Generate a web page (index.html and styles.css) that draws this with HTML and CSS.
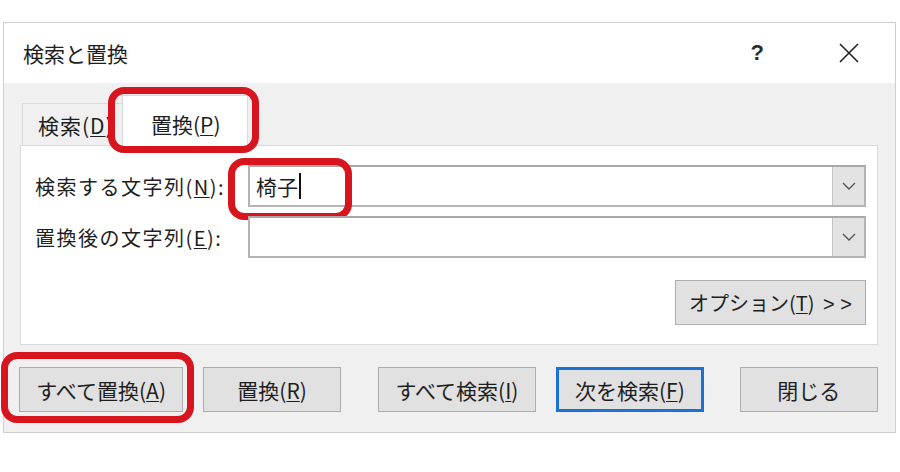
FILE: index.html
```html
<!DOCTYPE html>
<html lang="ja">
<head>
    <meta charset="UTF-8">
    <title>検索と置換</title>
    <link rel="stylesheet" href="styles.css">
</head>
<body>
<div class="dialog">
    <div class="title-bar">
        <span class="title">検索と置換</span>
        <span class="help">?</span>
        <span class="close">
            <svg width="22" height="22" viewBox="0 0 22 22"><path d="M2 2 L20 20 M20 2 L2 20" stroke="#222" stroke-width="1.6" fill="none"/></svg>
        </span>
    </div>
    <div class="dialog-body">
        <div class="tabs">
            <div class="tab">検索(<u>D</u>)</div>
            <div class="tab active">置換(<u>P</u>)</div>
            <div class="mark mark-tab"></div>
        </div>
        <div class="panel">
            <div class="field-row">
                <label class="field-label">検索する文字列(<u>N</u>):</label>
                <div class="combo">
                    <span class="combo-text">椅子<span class="caret"></span></span>
                    <span class="combo-button">
                        <svg width="14" height="8" viewBox="0 0 14 8"><path d="M1 1 L7 7 L13 1" stroke="#555" stroke-width="1.4" fill="none"/></svg>
                    </span>
                </div>
                <div class="mark mark-input"></div>
            </div>
            <div class="field-row">
                <label class="field-label">置換後の文字列(<u>E</u>):</label>
                <div class="combo">
                    <span class="combo-text"></span>
                    <span class="combo-button">
                        <svg width="14" height="8" viewBox="0 0 14 8"><path d="M1 1 L7 7 L13 1" stroke="#555" stroke-width="1.4" fill="none"/></svg>
                    </span>
                </div>
            </div>
            <div class="options-row">
                <button class="btn btn-options">オプション(<u>T</u>) <span class="arrows">&gt; &gt;</span></button>
            </div>
        </div>
        <div class="button-row">
            <button class="btn btn-all">すべて置換(<u>A</u>)</button>
            <button class="btn btn-replace">置換(<u>R</u>)</button>
            <button class="btn btn-findall">すべて検索(<u>I</u>)</button>
            <button class="btn btn-next">次を検索(<u>F</u>)</button>
            <button class="btn btn-close">閉じる</button>
            <div class="mark mark-all"></div>
        </div>
    </div>
</div>
</body>
</html>
```

FILE: styles.css
```css
/* General styles */
body {
    margin: 0;
    background-color: #fff;
    font-family: "Noto Sans CJK JP", "Noto Sans", sans-serif;
    color: #1e1e1e;
}

u {
    text-decoration-thickness: 1px;
    text-underline-offset: 2px;
}

/* Dialog frame */
.dialog {
    margin: 22px 4px 0 3px;
    height: 409px;
    border: 1px solid #cfcfcf;
    display: flex;
    flex-direction: column;
    background-color: #f0f0f0;
}

.title-bar {
    height: 60px;
    background-color: #fff;
    display: flex;
    align-items: center;
    padding-left: 19px;
}

.title {
    font-size: 21px;
    flex: 1;
}

.help {
    font-family: "Liberation Sans", sans-serif;
    font-size: 22px;
    font-weight: bold;
    color: #2a2a2a;
    margin-right: 74px;
}

.close {
    display: flex;
    margin-right: 35px;
}

.dialog-body {
    flex: 1;
    padding: 0 17px 0 16px;
    display: flex;
    flex-direction: column;
}

/* Tabs */
.tabs {
    display: flex;
    align-items: flex-end;
    height: 62px;
    padding-left: 2px;
    position: relative;
}

.tab {
    font-size: 21px;
    height: 42px;
    line-height: 42px;
    padding: 0 0 0 15px;
    border-top: 1px solid #d9d9d9;
    border-left: 1px solid #d9d9d9;
    box-sizing: border-box;
    width: 102px;
    overflow: hidden;
    white-space: nowrap;
    letter-spacing: 1px;
}

.tab.active {
    background-color: #fff;
    height: 51px;
    line-height: 56px;
    width: 126px;
    margin-left: -2px;
    margin-bottom: -1px;
    padding-left: 28px;
    letter-spacing: 0;
    border-right: 1px solid #d9d9d9;
    position: relative;
}

/* Panel */
.panel {
    background-color: #fff;
    border: 1px solid #d9d9d9;
    height: 200px;
    box-sizing: border-box;
    padding: 19px 11px 0 14px;
    display: flex;
    flex-direction: column;
    gap: 9px;
}

.field-row {
    display: flex;
    align-items: center;
    position: relative;
}

.field-label {
    font-size: 20px;
    letter-spacing: 1.5px;
    width: 213px;
    white-space: nowrap;
}

.combo {
    flex: 1;
    height: 42px;
    border: 2px solid #b4b4b4;
    border-top-color: #a8a8a8;
    box-sizing: border-box;
    display: flex;
    background-color: #fff;
}

.combo-text {
    flex: 1;
    font-size: 21px;
    padding-left: 6px;
    line-height: 36px;
    display: flex;
    align-items: center;
}

.caret {
    display: inline-block;
    width: 2px;
    height: 26px;
    background-color: #111;
    margin-left: 1px;
}

.combo-button {
    width: 31px;
    background-color: #e3e3e3;
    border-left: 1px solid #c4c4c4;
    display: flex;
    align-items: center;
    justify-content: center;
}

.options-row {
    display: flex;
    justify-content: flex-end;
    margin-top: 13px;
}

/* Buttons */
.btn {
    font-family: inherit;
    font-size: 21px;
    color: #1e1e1e;
    background-color: #e1e1e1;
    border: 1px solid #adadad;
    height: 45px;
    padding: 0;
    box-sizing: border-box;
}

.btn-options {
    width: 191px;
    font-size: 20px;
}

.arrows {
    font-family: "Liberation Sans", sans-serif;
    margin-left: 4px;
}

.button-row {
    display: flex;
    margin-top: 22px;
    position: relative;
}

.btn-all { width: 165px; margin-left: -1px; }
.btn-replace { width: 138px; margin-left: 20px; }
.btn-findall { width: 159px; margin-left: 37px; }
.btn-next { width: 148px; margin-left: 20px; border: 3px solid #1a73d2; }
.btn-close { width: 139px; margin-left: 36px; }

/* Red annotation marks */
.mark {
    position: absolute;
    border: 7px solid #d8141e;
    border-radius: 16px;
    box-sizing: border-box;
    pointer-events: none;
}

.mark-tab {
    left: 88px;
    top: 4px;
    width: 151px;
    height: 66px;
}

.mark-input {
    left: 193px;
    top: -7px;
    width: 124px;
    height: 62px;
}

.mark-all {
    left: -19px;
    top: -15px;
    width: 193px;
    height: 71px;
}
```
